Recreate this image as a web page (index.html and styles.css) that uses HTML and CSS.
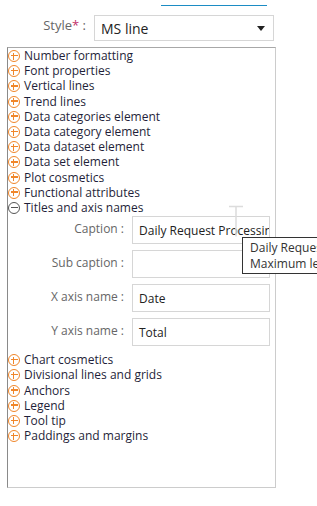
FILE: index.html
```html
<!DOCTYPE html>
<html>
<head>
  <title>Chart properties</title>
  <link rel="stylesheet" href="styles.css">
</head>
<body>
  <div class="topline"></div>

  <div class="style-row">
    <label class="style-label">Style<span class="req">*</span> :</label>
    <div class="select">
      <span>MS line</span>
      <span class="caret"></span>
    </div>
  </div>

  <div class="panel">
    <ul class="groups">
      <li><span class="ico plus"></span>Number formatting</li>
      <li><span class="ico plus"></span>Font properties</li>
      <li><span class="ico plus"></span>Vertical lines</li>
      <li><span class="ico plus"></span>Trend lines</li>
      <li><span class="ico plus"></span>Data categories element</li>
      <li><span class="ico plus"></span>Data category element</li>
      <li><span class="ico plus"></span>Data dataset element</li>
      <li><span class="ico plus"></span>Data set element</li>
      <li><span class="ico plus"></span>Plot cosmetics</li>
      <li><span class="ico plus"></span>Functional attributes</li>
      <li><span class="ico minus"></span>Titles and axis names</li>
    </ul>

    <div class="fields">
      <div class="field">
        <label>Caption :</label>
        <div class="input">Daily Request Processing</div>
      </div>
      <div class="field">
        <label>Sub caption :</label>
        <div class="input"></div>
      </div>
      <div class="field">
        <label>X axis name :</label>
        <div class="input">Date</div>
      </div>
      <div class="field">
        <label>Y axis name :</label>
        <div class="input">Total</div>
      </div>
    </div>

    <ul class="groups">
      <li><span class="ico plus"></span>Chart cosmetics</li>
      <li><span class="ico plus"></span>Divisional lines and grids</li>
      <li><span class="ico plus"></span>Anchors</li>
      <li><span class="ico plus"></span>Legend</li>
      <li><span class="ico plus"></span>Tool tip</li>
      <li><span class="ico plus"></span>Paddings and margins</li>
    </ul>
  </div>

  <!-- mouse cursor over the caption field -->
  <svg class="ibeam" width="16" height="32" viewBox="0 0 16 32">
    <path d="M1 1.5h14M8 1.5v30" stroke="#dcdcdc" stroke-width="1.5" fill="none"/>
  </svg>

  <div class="tooltip">
    Daily Request Processing<br>
    Maximum length 255 characters
  </div>
</body>
</html>
```

FILE: styles.css
```css
html, body {
  margin: 0;
  padding: 0;
  width: 317px;
  height: 506px;
  overflow: hidden;
  background-color: #FFFFFF;
  font-family: "Open Sans", "Noto Sans", sans-serif;
  font-size: 12px;
  color: #222222;
  position: relative;
}

.topline {
  margin: 5px 0 0 161px;
  width: 106px;
  height: 1px;
  background-color: #1c8cc4;
}

.style-row {
  display: flex;
  align-items: center;
  margin-top: 9px;
}

.style-label {
  width: 94px;
  text-align: right;
  color: #666666;
  font-size: 13px;
  padding-right: 8px;
  box-sizing: border-box;
  margin-top: -6px;
}

.style-label .req {
  color: #c2306a;
}

.select {
  width: 180px;
  height: 26px;
  border: 1px solid #d6d6d6;
  box-sizing: border-box;
  display: flex;
  align-items: center;
  justify-content: space-between;
  padding: 0 8px 0 6px;
  font-size: 14px;
  color: #222222;
}

.caret {
  width: 0;
  height: 0;
  border-left: 4px solid transparent;
  border-right: 4px solid transparent;
  border-top: 5px solid #222222;
}

.panel {
  margin: 6px 0 0 7px;
  width: 269px;
  height: 441px;
  box-sizing: border-box;
  border: 1px solid #cccccc;
  border-top-color: #a8a8a8;
  border-left-color: #8a8a8a;
}

.groups {
  list-style: none;
  margin: 0;
  padding: 0;
}

.groups li {
  height: 15.2px;
  line-height: 15px;
  display: flex;
  align-items: center;
  white-space: nowrap;
  color: #1f1f3a;
}

.ico {
  width: 12px;
  height: 12px;
  box-sizing: border-box;
  border-radius: 50%;
  border: 1.7px solid #f0862a;
  margin: 1px 4px 0 0;
  position: relative;
  flex-shrink: 0;
}

.ico::before,
.ico::after {
  content: "";
  position: absolute;
  background-color: #f0862a;
}

.ico::before {
  left: 1.5px;
  right: 1.5px;
  top: 3.6px;
  height: 1.5px;
}

.plus::after {
  top: 1.5px;
  bottom: 1.5px;
  left: 3.6px;
  width: 1.5px;
}

.minus {
  border-color: #555555;
  border-width: 1.4px;
}

.minus::before {
  background-color: #555555;
}

.fields {
  padding: 1px 0 6px 0;
  display: flex;
  flex-direction: column;
  gap: 6px;
}

.field {
  display: flex;
  align-items: center;
}

.field label {
  width: 124px;
  text-align: right;
  color: #666666;
  padding-right: 8px;
  box-sizing: border-box;
  margin-top: -3px;
}

.input {
  width: 138px;
  height: 28px;
  box-sizing: border-box;
  border: 1px solid #d6d6d6;
  padding: 3px 6px 0 6px;
  line-height: 22px;
  white-space: nowrap;
  overflow: hidden;
  color: #222222;
}

.ibeam {
  position: absolute;
  left: 228px;
  top: 205px;
}

.tooltip {
  position: absolute;
  left: 242px;
  top: 237px;
  padding: 2px 6px 2px 7px;
  border: 1px solid #333333;
  background-color: #FFFFFF;
  color: #333333;
  line-height: 15.5px;
  white-space: nowrap;
}
```
